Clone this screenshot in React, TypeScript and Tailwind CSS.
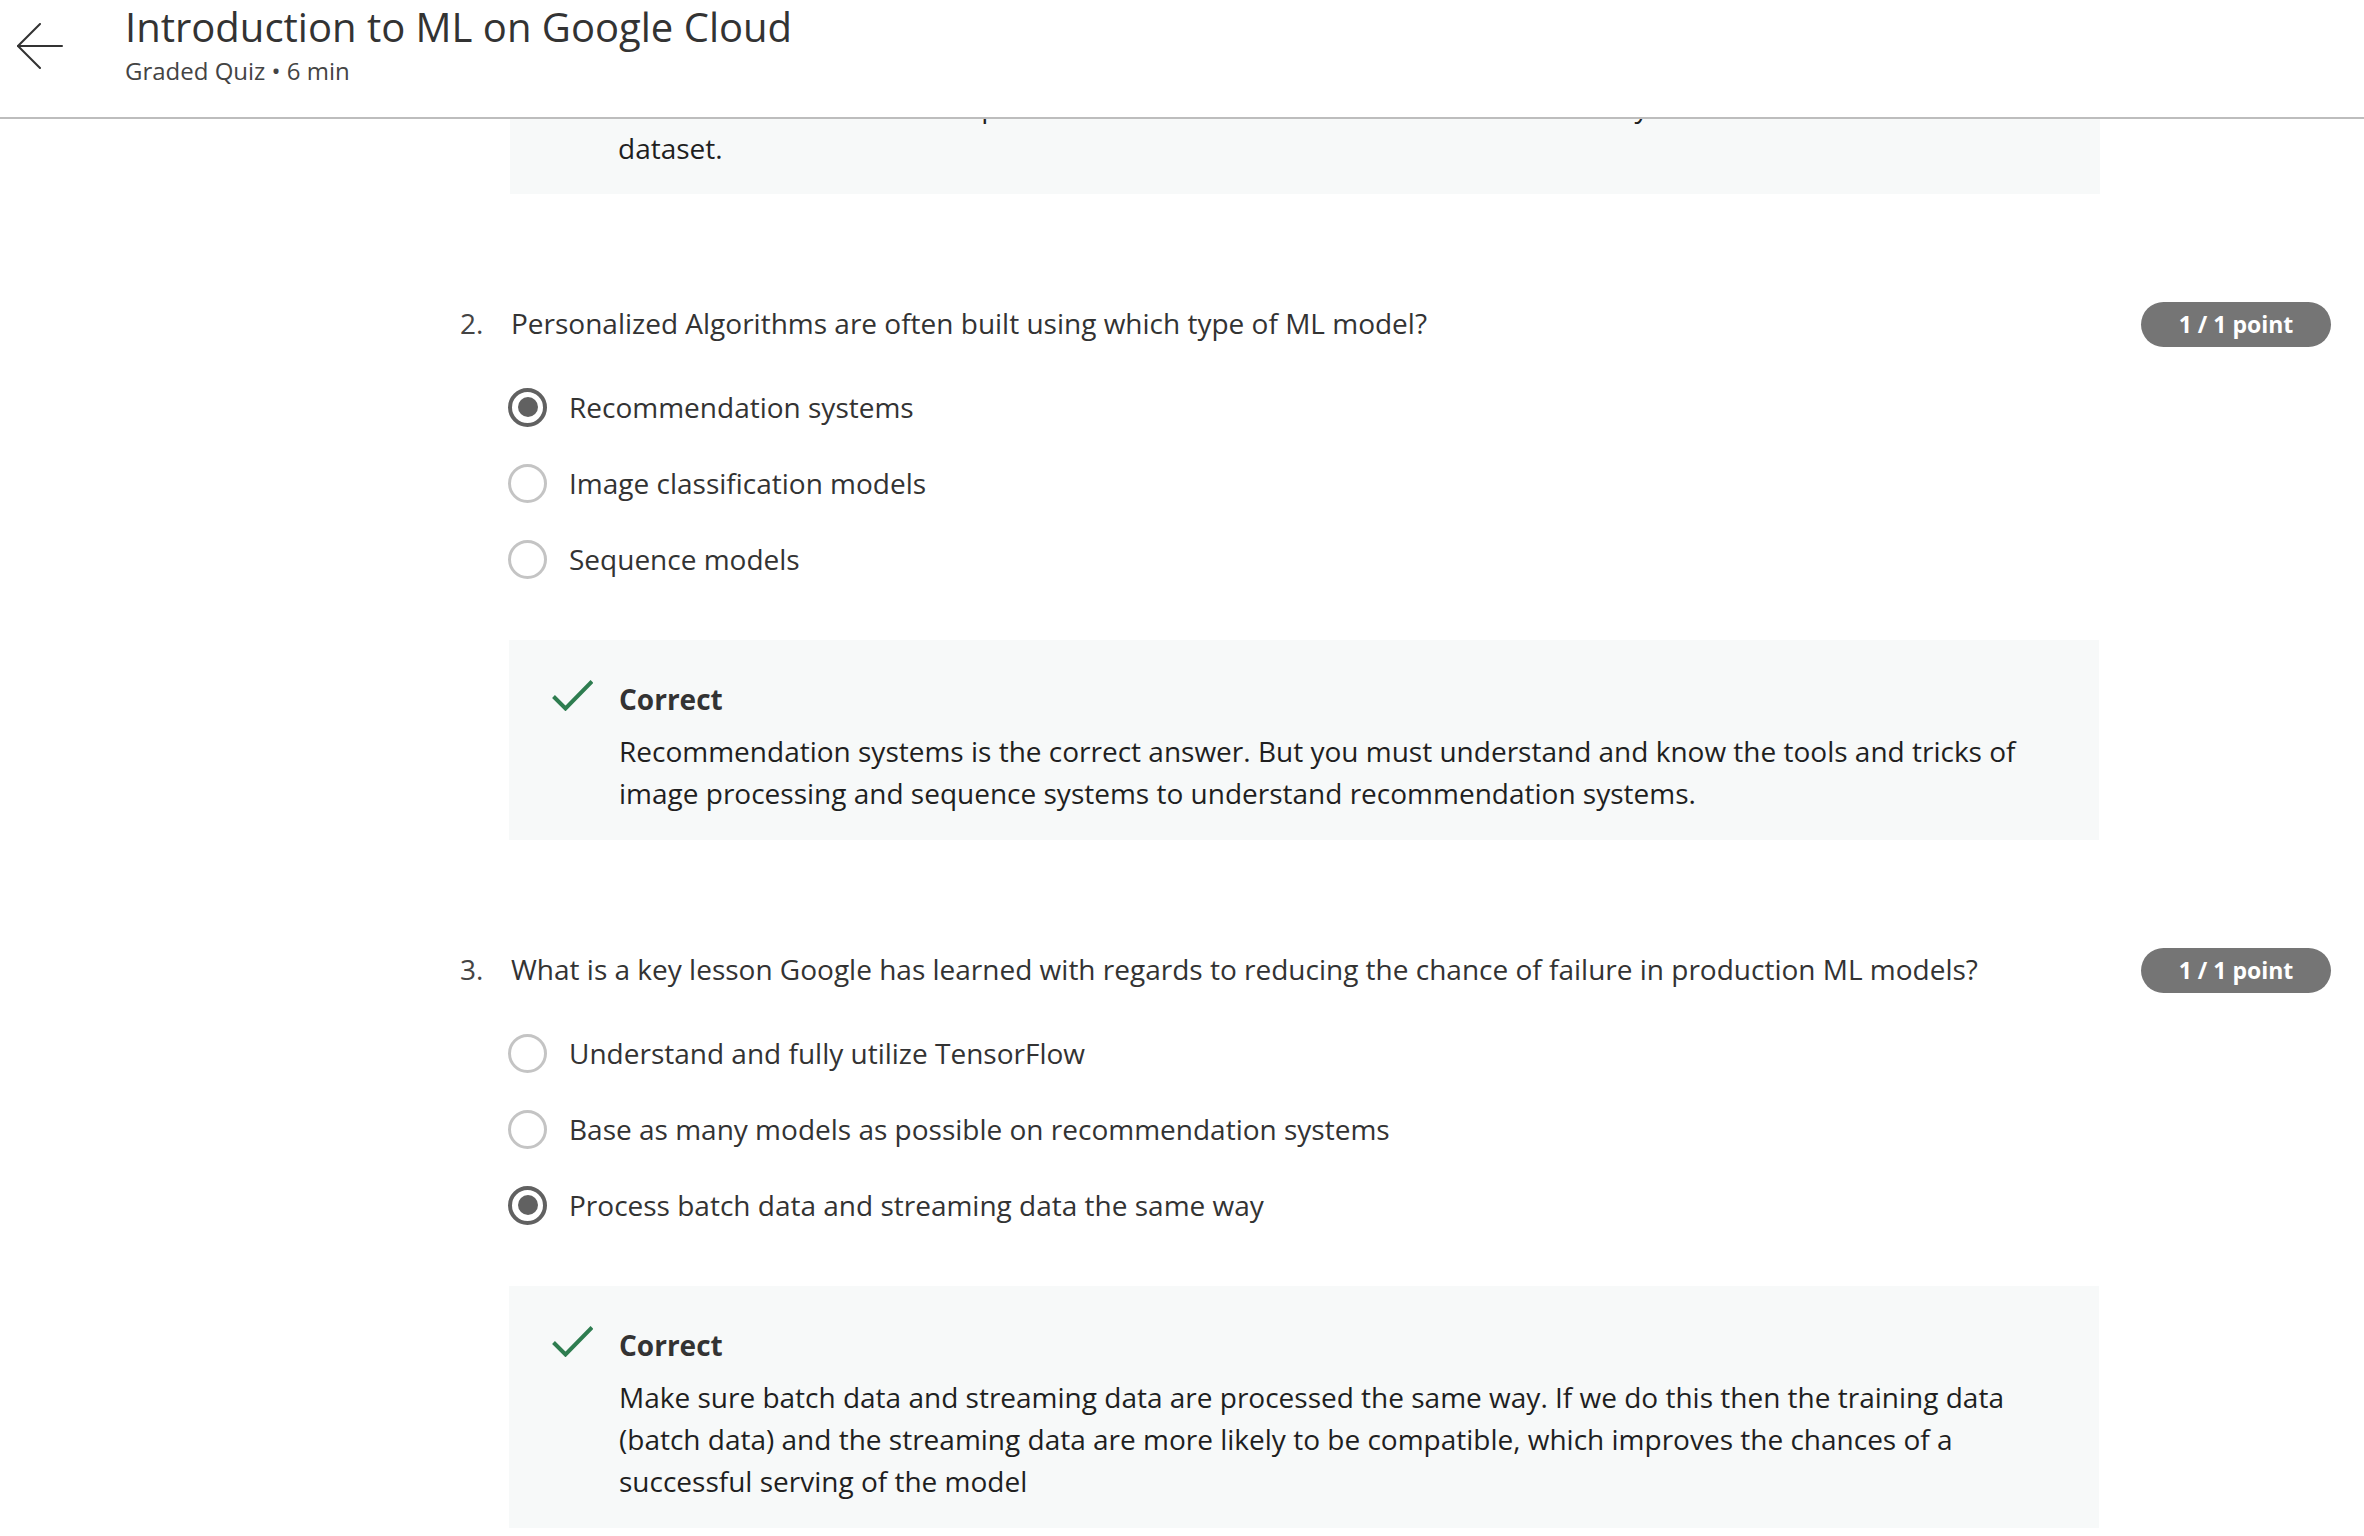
import React from "react";

type Question = {
  num: number;
  text: string;
  options: string[];
  selected: number;
  feedback: string;
};

const questions: Question[] = [
  {
    num: 2,
    text: "Personalized Algorithms are often built using which type of ML model?",
    options: ["Recommendation systems", "Image classification models", "Sequence models"],
    selected: 0,
    feedback:
      "Recommendation systems is the correct answer. But you must understand and know the tools and tricks of image processing and sequence systems to understand recommendation systems.",
  },
  {
    num: 3,
    text: "What is a key lesson Google has learned with regards to reducing the chance of failure in production ML models?",
    options: [
      "Understand and fully utilize TensorFlow",
      "Base as many models as possible on recommendation systems",
      "Process batch data and streaming data the same way",
    ],
    selected: 2,
    feedback:
      "Make sure batch data and streaming data are processed the same way. If we do this then the training data (batch data) and the streaming data are more likely to be compatible, which improves the chances of a successful serving of the model",
  },
];

function BackArrow() {
  return (
    <svg width="46" height="46" viewBox="0 0 46 46" fill="none" stroke="#333" strokeWidth="2" strokeLinecap="round">
      <path d="M45 23H1" />
      <path d="M23 1L1 23l22 22" />
    </svg>
  );
}

function CheckIcon() {
  return (
    <svg width="41" height="31" viewBox="0 0 41 31" fill="none" stroke="#2e7d50" strokeWidth="4">
      <path d="M1.5 16.5l12 12L40 1.5" />
    </svg>
  );
}

function Radio({ checked }: { checked: boolean }) {
  if (checked) {
    return (
      <span className="w-[39px] h-[39px] rounded-full border-[4px] border-[#616161] flex items-center justify-center shrink-0">
        <span className="w-[20px] h-[20px] rounded-full bg-[#616161]" />
      </span>
    );
  }
  return <span className="w-[39px] h-[39px] rounded-full border-[3px] border-[#c4c4c4] shrink-0" />;
}

function Feedback({ text }: { text: string }) {
  return (
    <div className="w-[1590px] bg-[#f7f9f9] pt-[38px] pb-[26px] pl-[43px] pr-[50px] flex gap-[26px]">
      <div className="w-[41px] shrink-0 pt-[2px]">
        <CheckIcon />
      </div>
      <div className="flex flex-col gap-[10px]">
        <div className="font-bold text-[28px] leading-[42px] text-[#333]">Correct</div>
        <p className="text-[28px] leading-[42px] text-[#1f1f1f]">{text}</p>
      </div>
    </div>
  );
}

function QuestionBlock({ q }: { q: Question }) {
  return (
    <div className="mt-[108px]">
      <div className="flex items-start">
        <span className="w-[51px] shrink-0 text-[28px] leading-[42px] text-[#444]">{q.num}.</span>
        <p className="flex-1 text-[28px] leading-[42px] text-[#333]">{q.text}</p>
        <span className="w-[190px] h-[45px] rounded-full bg-[#757575] text-white font-bold text-[23px] flex items-center justify-center shrink-0">
          1 / 1 point
        </span>
      </div>
      <div className="ml-[48px] mt-[39px] flex flex-col gap-[34px]">
        {q.options.map((o, i) => (
          <label key={o} className="flex items-center gap-[22px] h-[42px]">
            <Radio checked={i === q.selected} />
            <span className="text-[28px] leading-[42px] text-[#333]">{o}</span>
          </label>
        ))}
      </div>
      <div className="ml-[49px] mt-[60px]">
        <Feedback text={q.feedback} />
      </div>
    </div>
  );
}

export default function App() {
  return (
    <div className="min-h-screen bg-white" style={{ fontFamily: '"Open Sans", "Noto Sans", sans-serif' }}>
      <header className="sticky top-0 z-10 bg-white h-[119px] border-b-2 border-[#bdbdbd] flex items-start pl-[17px]">
        <div className="mt-[23px]">
          <BackArrow />
        </div>
        <div className="ml-[62px] pt-[3px]">
          <h1 className="text-[40px] leading-[48px] text-[#333]">Introduction to ML on Google Cloud</h1>
          <div className="mt-[4px] text-[24px] leading-[32px] text-[#444]">Graded Quiz • 6 min</div>
        </div>
      </header>

      <main className="pl-[460px] pr-[33px] pb-[40px]">
        <div className="ml-[50px] -mt-[34px] w-[1590px] bg-[#f7f9f9] pl-[108px] pr-[50px] pb-[25px]">
          <p className="text-[28px] leading-[42px] text-[#1f1f1f]">
            Most of the data in an enterprise is unstructured and it is hard to store it in any standard table.
          </p>
          <p className="text-[28px] leading-[42px] text-[#1f1f1f]">dataset.</p>
        </div>
        {questions.map((q) => (
          <QuestionBlock key={q.num} q={q} />
        ))}
      </main>
    </div>
  );
}
